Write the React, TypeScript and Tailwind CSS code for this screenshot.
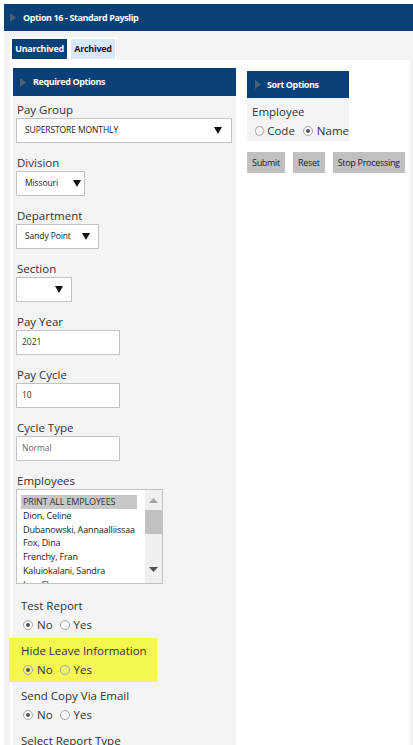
import React from "react";

const BLUE = "bg-[#0a4078]";

function Tri({ className = "" }: { className?: string }) {
  return (
    <svg className={className} width="6" height="9" viewBox="0 0 6 9">
      <polygon points="0,0 6,4.5 0,9" fill="#4d5d72" />
    </svg>
  );
}

function Down() {
  return (
    <svg width="8" height="7" viewBox="0 0 8 7">
      <polygon points="0,0 8,0 4,7" fill="#111" />
    </svg>
  );
}

function Radio({ checked, yellow = false }: { checked?: boolean; yellow?: boolean }) {
  return (
    <span
      className={`inline-flex h-[10px] w-[10px] items-center justify-center rounded-full border border-[#a8a8a8] ${
        yellow ? "bg-[#eef07a]" : "bg-[#f8f8f8]"
      }`}
    >
      {checked && <span className="h-[4px] w-[4px] rounded-full bg-[#555]" />}
    </span>
  );
}

function Field({ label, children }: { label: string; children: React.ReactNode }) {
  return (
    <div className="mb-[12px]">
      <div className="h-[16px] pl-[4px] text-[11.5px] leading-[16px] text-[#333]">{label}</div>
      <div className="pl-[3px]">{children}</div>
    </div>
  );
}

function Select({ value, w, pr }: { value: string; w: string; pr: string }) {
  return (
    <div className={`flex h-[25px] ${w} items-center justify-between border border-[#c3c3c3] bg-white pl-[8px] ${pr}`}>
      <span className="text-[8.5px] tracking-[-0.1px] text-[#222]">{value}</span>
      <Down />
    </div>
  );
}

function Input({ value, muted }: { value: string; muted?: boolean }) {
  return (
    <div className="flex h-[25px] w-[104px] items-center border border-[#c3c3c3] bg-white pl-[5px]">
      <span className={`text-[8.5px] ${muted ? "text-[#6a6a6a]" : "text-[#333]"}`}>{value}</span>
    </div>
  );
}

function YesNo({ label, yellow }: { label: string; yellow?: boolean }) {
  return (
    <div className={`h-[44px] pt-[5px] ${yellow ? "-ml-[4px] w-[148px] bg-[#f6f653] pl-[12px]" : "pl-[8px]"}`}>
      <div className="h-[16px] text-[11.5px] leading-[16px] text-[#333]">{label}</div>
      <div className="mt-[3px] flex h-[16px] items-center pl-[2px] text-[11.5px] text-[#333]">
        <Radio checked yellow={yellow} />
        <span className="ml-[4px]">No</span>
        <span className="ml-[7px] flex items-center">
          <Radio yellow={yellow} />
        </span>
        <span className="ml-[4px]">Yes</span>
      </div>
    </div>
  );
}

const employees = [
  "Dion, Celine",
  "Dubanowski, Aannaalliissaa",
  "Fox, Dina",
  "Frenchy, Fran",
  "Kaluiokalani, Sandra",
  "Lee, Sharon",
];

export default function App() {
  return (
    <div className="min-h-screen bg-white pl-[4px] pt-[4px] font-['Open_Sans',sans-serif]">
      {/* title bar */}
      <div className={`flex h-[27px] items-center pl-[6px] ${BLUE}`}>
        <Tri />
        <span className="ml-[7px] text-[9px] font-bold tracking-[-0.4px] text-white">Option 16 - Standard Payslip</span>
      </div>

      <div className="min-h-[714px] bg-[#f4f4f4] pl-[6px] pr-[3px] pt-[6px]">
        {/* tabs */}
        <div className="flex w-fit gap-[4px] bg-white pb-[1px] pl-[2px] pr-[1px] pt-[2px]">
          <div className={`flex h-[20px] w-[55px] items-center justify-center whitespace-nowrap text-[9px] font-bold tracking-[-0.3px] text-white ${BLUE}`}>
            Unarchived
          </div>
          <div className="flex h-[20px] w-[44px] items-center justify-center whitespace-nowrap bg-[#dae8fb] text-[9px] font-bold tracking-[-0.3px] text-[#1a1a1a]">
            Archived
          </div>
        </div>

        <div className="flex min-h-[690px] bg-white pl-[3px] pt-[8px]">
          {/* required options */}
          <div className="w-[223px] bg-[#f4f4f4]">
            <div className={`flex h-[28px] items-center pl-[7px] ${BLUE}`}>
              <Tri />
              <span className="ml-[7px] text-[9px] font-bold tracking-[-0.4px] text-white">Required Options</span>
            </div>
            <div className="pt-[6px]">
              <Field label="Pay Group">
                <Select value="SUPERSTORE MONTHLY" w="w-[216px]" pr="pr-[9px]" />
              </Field>
              <Field label="Division">
                <Select value="Missouri" w="w-[69px]" pr="pr-[3px]" />
              </Field>
              <Field label="Department">
                <Select value="Sandy Point" w="w-[83px]" pr="pr-[8px]" />
              </Field>
              <Field label="Section">
                <Select value="" w="w-[56px]" pr="pr-[8px]" />
              </Field>
              <Field label="Pay Year">
                <Input value="2021" />
              </Field>
              <Field label="Pay Cycle">
                <Input value="10" />
              </Field>
              <Field label="Cycle Type">
                <Input value="Normal" muted />
              </Field>

              <div className="mb-[9px]">
                <div className="h-[16px] pl-[4px] text-[11.5px] leading-[16px] text-[#333]">Employees</div>
                <div className="pl-[3px]">
                  <div className="flex h-[95px] w-[147px] overflow-hidden border border-[#c3c3c3] bg-white">
                    <div className="flex-1 overflow-hidden pl-[4px] pt-[5px] text-[9px] tracking-[-0.15px] text-[#222]">
                      <div className="w-[116px] bg-[#c8c8c8] pl-[2px] leading-[14px] text-[#333]">PRINT ALL EMPLOYEES</div>
                      {employees.map((e) => (
                        <div key={e} className="whitespace-nowrap pl-[2px] leading-[13.7px]">
                          {e}
                        </div>
                      ))}
                    </div>
                    <div className="flex w-[17px] shrink-0 flex-col items-center bg-[#f0f0f0]">
                      <svg className="mt-[8px]" width="9" height="5" viewBox="0 0 9 5">
                        <polygon points="0,5 9,5 4.5,0" fill="#a3a3a3" />
                      </svg>
                      <div className="mt-[7px] h-[24px] w-[17px] bg-[#c1c1c1]" />
                      <div className="flex-1" />
                      <svg className="mb-[11px]" width="9" height="5" viewBox="0 0 9 5">
                        <polygon points="0,0 9,0 4.5,5" fill="#505050" />
                      </svg>
                    </div>
                  </div>
                </div>
              </div>

              <div className="flex flex-col gap-[1px]">
                <YesNo label="Test Report" />
                <YesNo label="Hide Leave Information" yellow />
                <YesNo label="Send Copy Via Email" />
                <div className="h-[44px] pl-[8px] pt-[5px] text-[11.5px] leading-[16px] text-[#333]">Select Report Type</div>
              </div>
            </div>
          </div>

          {/* right side */}
          <div className="ml-[11px] pt-[3px]">
            <div className="w-[102px] bg-[#f4f4f4]">
              <div className={`flex h-[27px] items-center pl-[8px] ${BLUE}`}>
                <Tri />
                <span className="ml-[6px] text-[9px] font-bold tracking-[-0.4px] text-white">Sort Options</span>
              </div>
              <div className="h-[43px] pl-[5px] pt-[6px] text-[11.5px] text-[#333]">
                <div className="h-[16px] leading-[16px]">Employee</div>
                <div className="mt-[3px] flex h-[16px] items-center pl-[3px]">
                  <Radio />
                  <span className="ml-[3px]">Code</span>
                  <span className="ml-[8px] flex items-center">
                    <Radio checked />
                  </span>
                  <span className="ml-[4px]">Name</span>
                </div>
              </div>
            </div>
            <div className="mt-[11px] flex gap-[8px]">
              {["Submit", "Reset", "Stop Processing"].map((b) => (
                <div key={b} className="flex h-[21px] items-center whitespace-nowrap bg-[#c0c0c0] px-[5px] text-[9px] tracking-[-0.3px] text-[#222]">
                  {b}
                </div>
              ))}
            </div>
          </div>
        </div>
      </div>
    </div>
  );
}
